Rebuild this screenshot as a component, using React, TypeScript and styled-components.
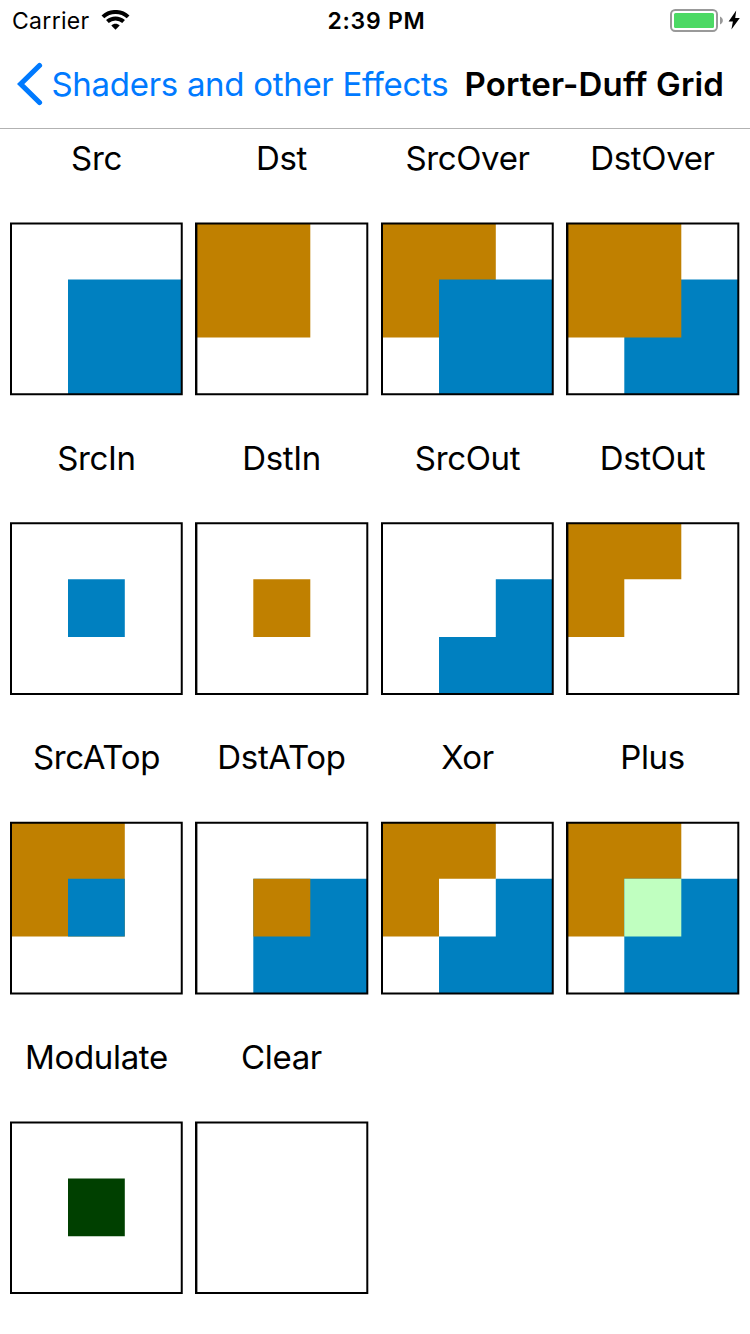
import React from "react";
import styled, { createGlobalStyle } from "styled-components";

const GlobalStyle = createGlobalStyle`
  body { margin: 0; background: #fff; color: #000; font-family: Inter, "Liberation Sans", sans-serif; }
  * { box-sizing: border-box; }
`;

const Screen = styled.div`
  width: 750px;
  height: 1334px;
  overflow: hidden;
  background: #fff;
  display: flex;
  flex-direction: column;
`;

const StatusBar = styled.header`
  height: 40px;
  flex: none;
  display: grid;
  grid-template-columns: 1fr auto 1fr;
  align-items: center;
  padding: 2px 9px 0 12px;
  font-size: 23px;
  line-height: 38px;
`;

const Carrier = styled.div`
  display: flex;
  align-items: center;
  gap: 11px;
  letter-spacing: 0.3px;
`;

const Clock = styled.div`
  font-weight: 600;
  letter-spacing: 0.75px;
`;

const Power = styled.div`
  display: flex;
  justify-content: flex-end;
  padding-bottom: 3px;
`;

const NavBar = styled.nav`
  height: 89px;
  flex: none;
  display: flex;
  align-items: center;
  padding-left: 17px;
  border-bottom: 1px solid #b2b2b2;
  white-space: nowrap;
`;

const BackLink = styled.a`
  display: flex;
  align-items: center;
  gap: 8.5px;
  width: 447.5px;
  color: #007aff;
  font-size: 33px;
  letter-spacing: -0.3px;
`;

const Title = styled.h1`
  margin: 0;
  font-size: 33px;
  font-weight: 600;
  letter-spacing: 0.17px;
`;

const Grid = styled.main`
  display: grid;
  grid-template-columns: 185px 186px 185px 174px;
  grid-template-rows: 300px 299px 300px 300px;
  padding-left: 10px;
`;

const Cell = styled.figure`
  margin: 0;
  display: flex;
  flex-direction: column;
`;

const Label = styled.figcaption`
  width: 173px;
  height: 93px;
  padding-top: 9px;
  display: flex;
  justify-content: center;
  font-size: 33px;
  line-height: 40px;
  letter-spacing: -0.35px;
`;

const Plot = styled.svg`
  display: block;
  width: 174px;
  height: 174px;
`;

const SRC = "#0080c0";
const DST = "#c08000";

type Fill = string | null;
interface Mode {
  name: string;
  dst: Fill;
  src: Fill;
  both: Fill;
}

const modes: Mode[] = [
  { name: "Src", dst: null, src: SRC, both: SRC },
  { name: "Dst", dst: DST, src: null, both: DST },
  { name: "SrcOver", dst: DST, src: SRC, both: SRC },
  { name: "DstOver", dst: DST, src: SRC, both: DST },
  { name: "SrcIn", dst: null, src: null, both: SRC },
  { name: "DstIn", dst: null, src: null, both: DST },
  { name: "SrcOut", dst: null, src: SRC, both: null },
  { name: "DstOut", dst: DST, src: null, both: null },
  { name: "SrcATop", dst: DST, src: null, both: SRC },
  { name: "DstATop", dst: null, src: SRC, both: DST },
  { name: "Xor", dst: DST, src: SRC, both: null },
  { name: "Plus", dst: DST, src: SRC, both: "#c0ffc0" },
  { name: "Modulate", dst: null, src: null, both: "#004000" },
  { name: "Clear", dst: null, src: null, both: null },
];

function BlendPlot({ mode, row, col }: { mode: Mode; row: number; col: number }) {
  const top = [0.6, 0.3, 0.8, 0.5][row];
  const right = col % 2 ? 173.3 : 172.75;
  const left = col % 2 ? 2.4 : 2;
  const a = col % 2 ? 58.3 : 58;
  const b = col % 2 ? 115.3 : 114.8;
  const c = top + 56.9;
  const d = top + 114.8;
  const bottom = top + 172.6;
  const { dst, src, both } = mode;
  // The overlap only needs its own square when neither full square already paints it.
  const overlap = both && both !== src && both !== dst;
  const dstShape = dst && (
    <path
      key="dst"
      fill={dst}
      d={both ? `M1 ${top + 1}H${b}V${d}H1Z` : `M1 ${top + 1}H${b}V${c}H${a}V${d}H1Z`}
    />
  );
  const srcShape = src && (
    <path
      key="src"
      fill={src}
      d={
        both
          ? `M${a} ${c}H${right - 1}V${bottom - 1}H${a}Z`
          : `M${b} ${c}H${right - 1}V${bottom - 1}H${a}V${d}H${b}Z`
      }
    />
  );
  return (
    <Plot viewBox="0 0 174 174">
      {both === dst ? [srcShape, dstShape] : [dstShape, srcShape]}
      {overlap && <path fill={both} d={`M${a} ${c}H${b}V${d}H${a}Z`} />}
      <path
        fillRule="evenodd"
        d={`M0 ${top}H${right}V${bottom}H0ZM${left} ${top + 2}V${bottom - 2}H${right - 2}V${top + 2}Z`}
      />
    </Plot>
  );
}

function WifiIcon() {
  return (
    <svg width="29" height="22" viewBox="0 0 29 22">
      <g fill="none" stroke="#000" strokeWidth="4">
        <path d="M1.9 6.9C8.9 0.3 20.1 0.3 27.1 6.9" />
        <path d="M6.4 11.6C11 7.4 18 7.4 22.6 11.6" />
      </g>
      <path d="M10.3 15.4C12.6 13.1 16.4 13.1 18.7 15.4L14.5 19.7Z" />
    </svg>
  );
}

function BatteryIcon() {
  return (
    <svg width="71" height="24" viewBox="0 0 71 24">
      <rect x="1" y="2" width="46" height="21" rx="4.2" fill="#fff" stroke="#999" strokeWidth="2" />
      <rect x="4" y="5" width="40" height="15" rx="1.5" fill="#4cd964" />
      <path d="M50 8.5C53.8 10 53.8 15 50 16.5Z" fill="#999" />
      <path d="M66.2 2.5L58.6 13.5H62.9L61.4 21.4L69.8 9.9H65.2Z" />
    </svg>
  );
}

export default function App() {
  return (
    <>
      <GlobalStyle />
      <Screen>
        <StatusBar>
          <Carrier>
            Carrier
            <WifiIcon />
          </Carrier>
          <Clock>2:39 PM</Clock>
          <Power>
            <BatteryIcon />
          </Power>
        </StatusBar>
        <NavBar>
          <BackLink>
            <svg width="26" height="44" viewBox="0 0 26 44">
              <path d="M22.5 3.5L3.7 22L22.5 40.5" fill="none" stroke="#007aff" strokeWidth="5.2" strokeLinecap="round" />
            </svg>
            Shaders and other Effects
          </BackLink>
          <Title>Porter-Duff Grid</Title>
        </NavBar>
        <Grid>
          {modes.map((mode, i) => (
            <Cell key={mode.name}>
              <Label>{mode.name}</Label>
              <BlendPlot mode={mode} row={Math.floor(i / 4)} col={i % 4} />
            </Cell>
          ))}
        </Grid>
      </Screen>
    </>
  );
}
